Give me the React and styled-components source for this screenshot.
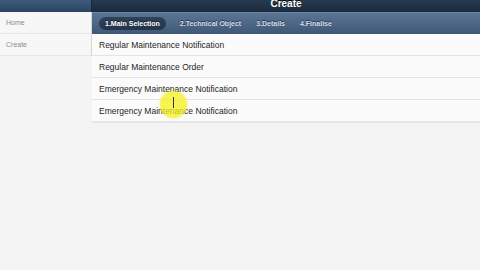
import styled, { createGlobalStyle } from 'styled-components';

const Global = createGlobalStyle`
  html, body {
    margin: 0;
    padding: 0;
    background: #f4f4f4;
    font-family: "Liberation Sans", Arial, sans-serif;
  }
`;

const Page = styled.div`
  width: 480px;
  height: 270px;
  display: grid;
  grid-template-columns: 92px 1fr;
  grid-template-rows: 12px 1fr;
  overflow: hidden;
  position: relative;
  background: #f4f4f4;
`;

const SideHeader = styled.div`
  background: linear-gradient(#3c5b7c, #2b4561);
  border-right: 1px solid #1a2838;
`;

const MainHeader = styled.div`
  background: linear-gradient(#263a50, #1b2a3b);
  display: flex;
  justify-content: center;
  align-items: flex-end;
  overflow: hidden;
`;

const Title = styled.h1`
  margin: 0 0 3px;
  font-size: 10px;
  line-height: 10px;
  font-weight: bold;
  color: #fff;
  text-shadow: 0 -1px 0 #000;
`;

const Sidebar = styled.nav`
  display: flex;
  flex-direction: column;
`;

const SideItem = styled.div`
  height: 22px;
  display: flex;
  align-items: center;
  padding-left: 6px;
  font-size: 7px;
  color: #8c8c8c;
  background: #f7f7f7;
  border-bottom: 1px solid #e6e6e6;
  border-right: 1px solid #d8d8d8;
  box-sizing: border-box;
`;

const Main = styled.main`
  display: flex;
  flex-direction: column;
`;

const Steps = styled.div`
  height: 22px;
  background: linear-gradient(#5a7594, #3f5876);
  border-top: 1px solid #6d87a4;
  box-sizing: border-box;
  display: flex;
  align-items: center;
  padding-left: 7px;
  gap: 13px;
  box-shadow: 0 1px 0 #2b3c50;
`;

const Step = styled.span`
  font-size: 7px;
  font-weight: bold;
  color: ${p => (p.active ? '#fff' : '#d4dde8')};
  background: ${p => (p.active ? 'linear-gradient(#2f4258, #24344a)' : 'transparent')};
  border-radius: 7px;
  padding: 3px ${p => (p.active ? '6px' : '1px')};
  text-shadow: 0 -1px 0 rgba(0, 0, 0, 0.5);
  white-space: nowrap;
`;

const List = styled.div`
  display: flex;
  flex-direction: column;
  box-shadow: 0 1px 1px rgba(0, 0, 0, 0.05);
`;

const Row = styled.div`
  height: 22px;
  box-sizing: border-box;
  display: flex;
  align-items: center;
  padding-left: 7px;
  font-size: 8.5px;
  color: #1e1e1e;
  background: #fbfbfb;
  border-bottom: 1px solid #e4e4e4;
`;

const Cursor = styled.div`
  position: absolute;
  left: 160px;
  top: 91px;
  width: 27px;
  height: 27px;
  border-radius: 50%;
  background: rgba(245, 240, 30, 0.75);
  box-shadow: 0 0 3px rgba(245, 240, 30, 0.6);
  pointer-events: none;

  &::after {
    content: '';
    position: absolute;
    left: 13px;
    top: 6px;
    width: 1px;
    height: 11px;
    background: #333;
  }
`;

const steps = ['1.Main Selection', '2.Technical Object', '3.Details', '4.Finalise'];
const rows = [
  'Regular Maintenance Notification',
  'Regular Maintenance Order',
  'Emergency Maintenance Notification',
  'Emergency Maintenance Notification',
];

export default function App() {
  return (
    <>
      <Global />
      <Page>
        <SideHeader />
        <MainHeader>
          <Title>Create</Title>
        </MainHeader>
        <Sidebar>
          <SideItem>Home</SideItem>
          <SideItem>Create</SideItem>
        </Sidebar>
        <Main>
          <Steps>
            {steps.map((s, i) => (
              <Step key={s} active={i === 0}>
                {s}
              </Step>
            ))}
          </Steps>
          <List>
            {rows.map((r, i) => (
              <Row key={i}>{r}</Row>
            ))}
          </List>
        </Main>
        <Cursor />
      </Page>
    </>
  );
}
